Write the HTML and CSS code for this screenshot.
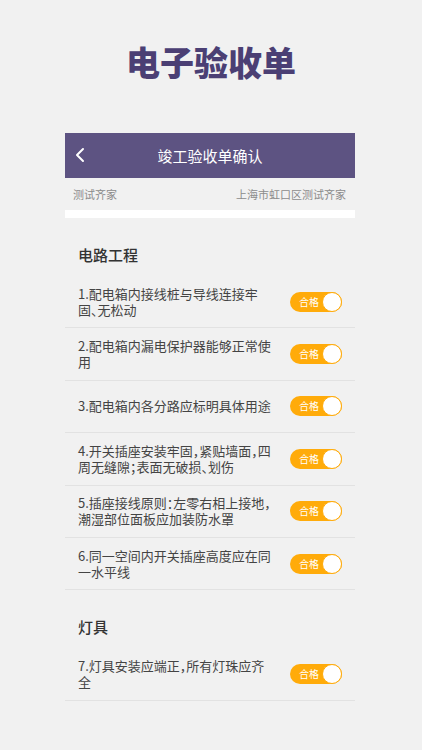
FILE: index.html
```html
<!DOCTYPE html>
<html lang="zh-CN">
<head>
    <meta charset="UTF-8">
    <meta name="viewport" content="width=device-width, initial-scale=1.0">
    <title>电子验收单</title>
    <link rel="stylesheet" href="styles.css">
</head>
<body>
    <div class="hero">
        <h1>电子验收单</h1>
    </div>

    <div class="phone">
        <div class="navbar">
            <svg class="back" width="12" height="16" viewBox="0 0 12 16">
                <polyline points="9,2 3,8 9,14" fill="none" stroke="#fff" stroke-width="2" stroke-linecap="round" stroke-linejoin="round"/>
            </svg>
            <span class="nav-title">竣工验收单确认</span>
        </div>
        <div class="info">
            <span>测试齐家</span>
            <span>上海市虹口区测试齐家</span>
        </div>
        <div class="strip"></div>

        <div class="group">
            <h2>电路工程</h2>
            <div class="item">
                <p>1.配电箱内接线桩与导线连接牢固、无松动</p>
                <span class="switch">合格</span>
            </div>
            <div class="item">
                <p>2.配电箱内漏电保护器能够正常使用</p>
                <span class="switch">合格</span>
            </div>
            <div class="item">
                <p>3.配电箱内各分路应标明具体用途</p>
                <span class="switch">合格</span>
            </div>
            <div class="item">
                <p>4.开关插座安装牢固，紧贴墙面，四周无缝隙；表面无破损、划伤</p>
                <span class="switch">合格</span>
            </div>
            <div class="item">
                <p>5.插座接线原则：左零右相上接地，潮湿部位面板应加装防水罩</p>
                <span class="switch">合格</span>
            </div>
            <div class="item">
                <p>6.同一空间内开关插座高度应在同一水平线</p>
                <span class="switch">合格</span>
            </div>
        </div>

        <div class="group">
            <h2>灯具</h2>
            <div class="item">
                <p>7.灯具安装应端正，所有灯珠应齐全</p>
                <span class="switch">合格</span>
            </div>
        </div>
    </div>
</body>
</html>
```

FILE: styles.css
```css
body {
    margin: 0;
    background-color: #f1f1f1;
    font-family: "Noto Sans CJK SC", "Noto Sans", sans-serif;
    font-feature-settings: "halt";
}
.hero {
    height: 133px;
    padding-top: 42px;
    box-sizing: border-box;
}
.hero h1 {
    margin: 0;
    text-align: center;
    font-size: 34px;
    line-height: 40px;
    font-weight: 900;
    color: #4b3f74;
}
.phone {
    width: 290px;
    margin-left: 65px;
}
.navbar {
    position: relative;
    height: 45px;
    background-color: #5d5382;
    display: flex;
    align-items: center;
    justify-content: center;
}
.back {
    position: absolute;
    left: 9px;
    top: 14px;
}
.nav-title {
    color: #fff;
    font-size: 15px;
}
.info {
    height: 32px;
    display: flex;
    justify-content: space-between;
    align-items: center;
    padding: 0 9px 0 8px;
    font-size: 11px;
    color: #8c8c8c;
}
.strip {
    height: 8px;
    background-color: #fff;
}
.group h2 {
    margin: 0;
    padding: 26px 13px 11px;
    font-size: 15px;
    line-height: 21px;
    font-weight: 500;
    color: #333;
}
.item {
    height: 52.4px;
    box-sizing: border-box;
    border-bottom: 1px solid #e2e2e2;
    display: flex;
    align-items: center;
    justify-content: space-between;
    padding: 0 13px;
}
.item p {
    margin: 0;
    width: 196px;
    font-size: 13px;
    line-height: 16px;
    color: #444;
}
.switch {
    position: relative;
    width: 52px;
    height: 20px;
    box-sizing: border-box;
    border-radius: 10px;
    background-color: #ffab0a;
    color: #fff;
    font-size: 10px;
    line-height: 20px;
    padding-left: 9px;
}
.switch::after {
    content: "";
    position: absolute;
    right: 0;
    top: 0;
    width: 20px;
    height: 20px;
    box-sizing: border-box;
    border-radius: 50%;
    border: 1px solid #ffab0a;
    background-color: #fff;
}
```
